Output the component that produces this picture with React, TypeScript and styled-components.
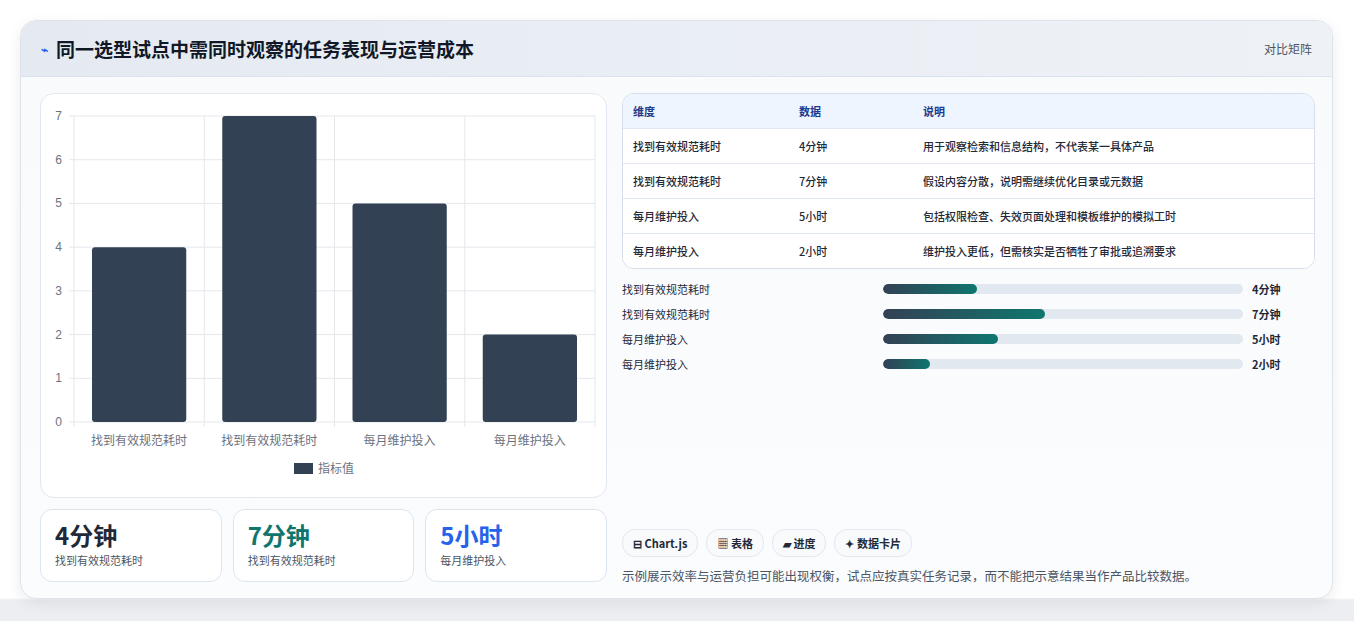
import React from "react";
import styled, { createGlobalStyle } from "styled-components";

const G = createGlobalStyle`
  body{margin:0;background:#eef0f3;font-family:"Noto Sans CJK SC","Noto Sans",sans-serif;}
`;
const Page = styled.div`height:621px;padding:20px 20px 0 20px;box-sizing:border-box;background:linear-gradient(#fff 0,#fff 598px,#eceef2 600px);`;
const Card = styled.div`width:1313px;height:579px;border:1px solid #dde3ea;border-radius:16px;background:linear-gradient(#f8fafc,#fbfcfe);box-shadow:0 4px 14px rgba(15,23,42,.08);overflow:hidden;box-sizing:border-box;`;
const Header = styled.div`height:55px;display:flex;align-items:center;justify-content:space-between;padding:0 20px;background:linear-gradient(90deg,#e5eaf2,#eef2f7);border-bottom:1px solid #dbe3ec;`;
const Title = styled.h1`margin:0;font-size:19px;font-weight:700;color:#111827;display:flex;align-items:center;gap:8px;`;
const Tag = styled.span`font-size:12px;color:#4b5563;`;
const Body = styled.div`display:grid;grid-template-columns:567px 693px;gap:15px;padding:16px 19px 0 19px;`;
const Left = styled.div`display:flex;flex-direction:column;gap:11px;`;
const ChartBox = styled.div`height:403px;border:1px solid #e2e8f0;border-radius:14px;background:#fff;`;
const Stats = styled.div`display:grid;grid-template-columns:repeat(3,1fr);gap:11px;`;
const Stat = styled.div`height:73px;border:1px solid #dbe5f0;border-radius:12px;background:#fff;padding:10px 14px;box-sizing:border-box;`;
const StatV = styled.div<{c:string}>`font-size:24px;font-weight:700;color:${p=>p.c};line-height:30px;`;
const StatL = styled.div`font-size:11px;color:#4b5563;margin-top:2px;`;
const Right = styled.div`display:flex;flex-direction:column;`;
const Table = styled.div`border:1px solid #d5deea;border-radius:12px;overflow:hidden;background:#fff;`;
const Row = styled.div<{h?:boolean}>`display:grid;grid-template-columns:166px 124px 1fr;height:34px;align-items:center;padding:0 10px;font-size:11px;color:${p=>p.h?"#1e3a8a":"#1f2937"};background:${p=>p.h?"#eef5ff":"#fff"};border-top:${p=>p.h?"none":"1px solid #e2e8f0"};font-weight:${p=>p.h?700:500};`;
const Bars = styled.div`display:flex;flex-direction:column;gap:8px;margin-top:11px;`;
const BarRow = styled.div`display:grid;grid-template-columns:261px 360px 1fr;gap:0;align-items:center;font-size:11px;color:#1f2937;height:17px;`;
const Track = styled.div`height:10px;border-radius:5px;background:#e2e8f0;overflow:hidden;`;
const Fill = styled.div`height:100%;border-radius:5px;background:linear-gradient(90deg,#334155,#0f766e);`;
const BarVal = styled.span`font-weight:700;padding-left:9px;`;
const Chips = styled.div`display:flex;gap:8px;margin-top:157px;`;
const Chip = styled.span`height:26px;padding:0 10px;border:1px solid #e2e8f0;border-radius:13px;background:#f8fafc;font-size:11px;font-weight:600;color:#1f2937;display:flex;align-items:center;gap:3px;`;
const Note = styled.p`margin:9px 0 0;font-size:12.5px;color:#4b5563;`;

const labels=["找到有效规范耗时","找到有效规范耗时","每月维护投入","每月维护投入"];
const vals=[4,7,5,2];
function Chart(){
  const x0=33,x1=554,y0=328,yt=22;const sy=(y0-yt)/7;const cw=(x1-x0)/4;
  return <svg width="566" height="403">
    {Array.from({length:8}).map((_,i)=>{const y=y0-i*sy;return <g key={i}>
      <line x1={x0-5} x2={x1} y1={y} y2={y} stroke="#e5e7eb"/>
      <text x={21} y={y+4} fontSize="12" fill="#6b7280" textAnchor="end" fontFamily="Liberation Sans">{i}</text></g>})}
    {[0,1,2,3,4].map(i=><line key={i} x1={x0+i*cw} x2={x0+i*cw} y1={yt} y2={y0+5} stroke="#e5e7eb"/>)}
    {vals.map((v,i)=><rect key={i} x={x0+i*cw+18} width={cw-36} y={y0-v*sy} height={v*sy} rx="3" fill="#334155"/>)}
    {labels.map((l,i)=><text key={i} x={x0+i*cw+cw/2} y={351} fontSize="12" fill="#6b7280" textAnchor="middle">{l}</text>)}
    <rect x={253} y={369} width={19} height={11} fill="#334155"/>
    <text x={277} y={379} fontSize="12" fill="#6b7280">指标值</text>
  </svg>;
}
const rows=[["找到有效规范耗时","4分钟","用于观察检索和信息结构，不代表某一具体产品"],["找到有效规范耗时","7分钟","假设内容分散，说明需继续优化目录或元数据"],["每月维护投入","5小时","包括权限检查、失效页面处理和模板维护的模拟工时"],["每月维护投入","2小时","维护投入更低，但需核实是否牺牲了审批或追溯要求"]];
const pct=[26,45,32,13];
export default function App(){
  return <Page><G/><Card>
    <Header><Title><span style={{color:"#2563eb",fontSize:12}}>⌁</span>同一选型试点中需同时观察的任务表现与运营成本</Title><Tag>对比矩阵</Tag></Header>
    <Body>
      <Left>
        <ChartBox><Chart/></ChartBox>
        <Stats>
          <Stat><StatV c="#1f2937">4分钟</StatV><StatL>找到有效规范耗时</StatL></Stat>
          <Stat><StatV c="#0f766e">7分钟</StatV><StatL>找到有效规范耗时</StatL></Stat>
          <Stat><StatV c="#2563eb">5小时</StatV><StatL>每月维护投入</StatL></Stat>
        </Stats>
      </Left>
      <Right>
        <Table>
          <Row h><span>维度</span><span>数据</span><span>说明</span></Row>
          {rows.map((r,i)=><Row key={i}><span>{r[0]}</span><span>{r[1]}</span><span>{r[2]}</span></Row>)}
        </Table>
        <Bars>{rows.map((r,i)=><BarRow key={i}><span>{r[0]}</span><Track><Fill style={{width:pct[i]+"%"}}/></Track><BarVal>{r[1]}</BarVal></BarRow>)}</Bars>
        <Chips><Chip>⊟ Chart.js</Chip><Chip>▦ 表格</Chip><Chip>▰ 进度</Chip><Chip>✦ 数据卡片</Chip></Chips>
        <Note>示例展示效率与运营负担可能出现权衡，试点应按真实任务记录，而不能把示意结果当作产品比较数据。</Note>
      </Right>
    </Body>
  </Card></Page>;
}
